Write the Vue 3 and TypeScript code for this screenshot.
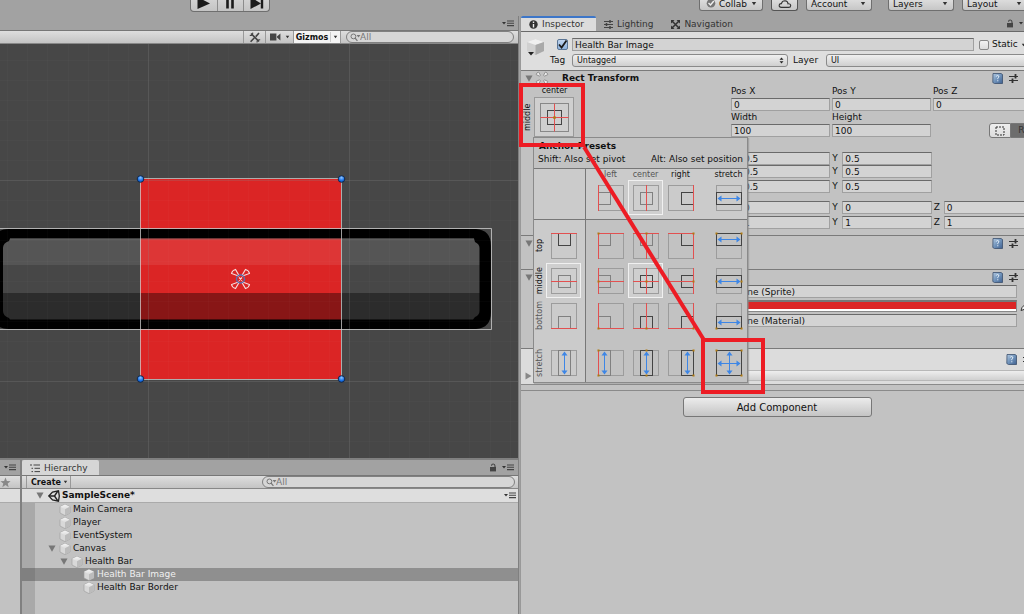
<script setup lang="ts">
import { ref } from 'vue'

type H = 'none' | 'left' | 'center' | 'right' | 'stretch'
type V = 'none' | 'top' | 'middle' | 'bottom' | 'stretch'

interface Glyph {
  box: { x: number; y: number; w: number; h: number }
  faint: boolean
  redX: number | null
  redY: number | null
  dots: { x: number; y: number }[]
  blueH: boolean
  blueV: boolean
}

const columns: H[] = ['left', 'center', 'right', 'stretch']
const rows: V[] = ['top', 'middle', 'bottom', 'stretch']

const lo = 5.5
const hi = 30.5
const mid = 18.5
const size = 12

function span(key: string): [number, number] {
  if (key === 'stretch') return [lo, hi - lo]
  if (key === 'left' || key === 'top') return [lo, size]
  if (key === 'right' || key === 'bottom') return [hi - size, size]
  return [mid - size / 2, size]
}

function anchor(key: string): number[] {
  if (key === 'stretch') return [lo, hi]
  if (key === 'left' || key === 'top') return [lo]
  if (key === 'right' || key === 'bottom') return [hi]
  return [mid]
}

function glyph(h: H, v: V): Glyph {
  const [x, w] = span(h === 'none' ? 'center' : h)
  const [y, ht] = span(v === 'none' ? 'middle' : v)
  const dots =
    h === 'none' || v === 'none' ? [] : anchor(h).flatMap((ax) => anchor(v).map((ay) => ({ x: ax, y: ay })))
  return {
    box: { x, y, w, h: ht },
    faint: h === 'left' || (h === 'center' && (v === 'top' || v === 'none')) || (h === 'none' && v !== 'top'),
    redX: h === 'none' || h === 'stretch' || (v === 'stretch' && h !== 'left') ? null : anchor(h)[0],
    redY: v === 'none' || v === 'stretch' || h === 'stretch' ? null : anchor(v)[0],
    dots,
    blueH: h === 'stretch',
    blueV: v === 'stretch',
  }
}

interface Cell { id: string; kind: string; on: boolean; g: Glyph }

const headerCells: Cell[] = columns.map((h) => ({
  id: 'head-' + h, kind: 'c-' + h, on: h === 'center', g: glyph(h, 'none'),
}))
const presetRows = rows.map((v) => ({
  v,
  head: { id: 'row-' + v, kind: 'c-head', on: v === 'middle', g: glyph('none', v) } as Cell,
  cells: columns.map((h) => ({
    id: v + '-' + h, kind: 'c-' + h, on: h === 'center' && v === 'middle', g: glyph(h, v),
  })) as Cell[],
}))

interface Node { name: string; depth: number; open?: boolean; selected?: boolean }
const nodes: Node[] = [
  { name: 'Main Camera', depth: 0 },
  { name: 'Player', depth: 0 },
  { name: 'EventSystem', depth: 0 },
  { name: 'Canvas', depth: 0, open: true },
  { name: 'Health Bar', depth: 1, open: true },
  { name: 'Health Bar Image', depth: 2, selected: true },
  { name: 'Health Bar Border', depth: 2 },
]

const objectName = ref('Health Bar Image')
const active = ref(true)
const isStatic = ref(false)

const minorX = [7, 27, 47, 68, 88, 108, 128, 168, 188, 208, 228, 248, 268, 289, 309, 329, 369, 389, 409, 429, 449, 469, 490, 510]
const minorY = [60, 80, 100, 120, 140, 160, 200, 220, 240, 261, 281, 301, 321, 341, 361, 401, 421, 441]
const handles = [[140, 179], [341, 179], [140, 379], [341, 379]]

const vectorRows = [
  { id: 'Anchor min', cls: '', x: '0.5', y: '0.5', z: null },
  { id: 'Anchor max', cls: '', x: '0.5', y: '0.5', z: null },
  { id: 'Pivot', cls: 'gap-s', x: '0.5', y: '0.5', z: null },
  { id: 'Rotation', cls: 'gap-l', x: '0', y: '0', z: '0' },
  { id: 'Scale', cls: 'gap-s', x: '1', y: '1', z: '1' },
]
</script>

<template>
  <div class="app">
    <svg class="defs" aria-hidden="true">
      <defs>
        <linearGradient id="cubeTop" x1="0" y1="0" x2="0" y2="1">
          <stop offset="0" stop-color="#f4f4f4" />
          <stop offset="1" stop-color="#dcdcdc" />
        </linearGradient>
        <linearGradient id="bookFill" x1="0" y1="0" x2="1" y2="1">
          <stop offset="0" stop-color="#b4cbe2" />
          <stop offset="0.5" stop-color="#6f92ba" />
          <stop offset="1" stop-color="#3f6090" />
        </linearGradient>
      </defs>
      <symbol id="cube" viewBox="0 0 12 12">
        <path d="M6 .5 11 2.6 V9 L6 11.6 1 9 V2.6Z" fill="#d8d8d8" stroke="#9a9a9a" stroke-width=".6" />
        <path d="M6 .6 10.8 2.7 6 5.2 1.2 2.7Z" fill="url(#cubeTop)" />
        <path d="M6 5.2 10.8 2.8 V8.9 L6 11.3Z" fill="#bcbcbc" />
      </symbol>
      <symbol id="book" viewBox="0 0 11 11">
        <path d="M1 .5 H9 L10.5 1.5 V10.5 H2.5 L.8 9.5Z" fill="url(#bookFill)" stroke="#3a4f6d" stroke-width=".8" />
        <path d="M4.3 3.6 Q4.5 2.4 5.7 2.5 Q7.2 2.7 6.8 4 Q6.6 4.7 5.8 5.2 V6.2 M5.8 7.2 V8.3" fill="none" stroke="#e6f0fa" stroke-width="1" />
      </symbol>
      <symbol id="sliders" viewBox="0 0 11 11">
        <path d="M1 3.5 H10 M1 7.5 H10" stroke="#333" stroke-width="1.2" />
        <path d="M7.5 1 V5.5 M4.5 5.5 V10" stroke="#333" stroke-width="1.8" />
      </symbol>
      <symbol id="menu" viewBox="0 0 12 7">
        <path d="M0 2 H4 L2 4.4Z" fill="#333" />
        <path d="M5 1 H12 M5 3.3 H12 M5 5.6 H12" stroke="#444" stroke-width="1.1" />
      </symbol>
      <symbol id="lock" viewBox="0 0 8 9">
        <rect x="1" y="4" width="6" height="4.4" fill="#444" />
        <path d="M2.5 2.8 Q2.6 1 4.2 1 Q6 1 6 3 V4.4" fill="none" stroke="#444" stroke-width="1.1" />
      </symbol>
      <symbol id="lens" viewBox="0 0 12 9">
        <circle cx="3.4" cy="3.4" r="2.4" fill="none" stroke="#777" />
        <path d="M5 5 L7.4 7.8" stroke="#777" stroke-width="1.2" />
        <path d="M6.5 2 H10.5 L8.5 4.6Z" fill="#777" />
      </symbol>
      <symbol id="down" viewBox="0 0 6 5"><path d="M.8 1 H5.2 L3 4.2Z" fill="#333" /></symbol>
      <symbol id="fold" viewBox="0 0 8 7"><path d="M.5 .5 H7.5 L4 6.8Z" fill="#777" /></symbol>
    </svg>

    <header class="topbar">
      <div class="play">
        <button type="button" aria-label="Play"><svg viewBox="0 0 26 11"><path d="M6.5 -3 L19 3.5 6.5 9Z" fill="#1b1b1b" /></svg></button>
        <button type="button" aria-label="Pause"><svg viewBox="0 0 26 11"><path d="M9.5 -1 V8.5 M14.5 -1 V8.5" stroke="#1b1b1b" stroke-width="2.6" /></svg></button>
        <button type="button" aria-label="Step"><svg viewBox="0 0 26 11"><path d="M6.5 -3 L17 3.5 6.5 9Z" fill="#1b1b1b" /><path d="M18 -1 V8.5" stroke="#1b1b1b" stroke-width="2.4" /></svg></button>
      </div>
      <div class="global">
        <button type="button" class="tb collab">
          <svg width="10" height="10" viewBox="0 0 10 10"><circle cx="5" cy="4.2" r="4.3" fill="#777" /><path d="M2.5 4 L4.5 6 7.8 2" fill="none" stroke="#f0f0f0" stroke-width="1.4" /></svg>
          <span>Collab</span>
          <svg width="6" height="5"><use href="#down" /></svg>
        </button>
        <button type="button" class="tb cloud" aria-label="Services">
          <svg width="14" height="10" viewBox="0 0 14 10"><path d="M3.4 7.4 Q1 7.2 1.2 5.2 Q1.5 3.4 3.4 3.6 Q4.2 .8 7 .8 Q9.8 1 10 3.8 Q12.6 3.6 12.7 5.6 Q12.6 7.4 10.8 7.4Z" fill="none" stroke="#333" stroke-width="1.1" /></svg>
        </button>
        <div class="tbsel account"><select aria-label="Account"><option>Account</option></select><svg width="6" height="5"><use href="#down" /></svg></div>
        <div class="tbsel layers"><select aria-label="Layers"><option>Layers</option></select><svg width="6" height="5"><use href="#down" /></svg></div>
        <div class="tbsel"><select aria-label="Layout"><option>Layout</option></select><svg width="6" height="5"><use href="#down" /></svg></div>
      </div>
    </header>

    <div class="workspace">
      <main class="left">
        <div class="strip scene-strip"><svg width="12" height="7"><use href="#menu" /></svg></div>
        <div class="toolbar">
          <button type="button" class="tool wide" aria-label="Tools">
            <svg width="12" height="11" viewBox="0 0 12 11"><path d="M2 1.5 L10 9.5 M10 1 L6.8 4.6 M5.2 6 L1.6 9.8" stroke="#444" stroke-width="1.6" /><path d="M.8 3.4 Q3.6 4 3.8 .6 M8 10.4 Q8 7.4 11.2 7.8" stroke="#444" fill="none" stroke-width="1.1" /></svg>
          </button>
          <button type="button" class="tool cam" aria-label="Camera">
            <svg width="11" height="8" viewBox="0 0 11 8"><path d="M0 .5 H6.4 V7.5 H0Z M7 3.6 L10.4 .4 V7.6 L7 4.6Z" fill="#444" /></svg>
            <svg width="5" height="4" viewBox="0 0 6 5"><use href="#down" width="6" height="5" /></svg>
          </button>
          <button type="button" class="tool gizmos">Gizmos <i></i><svg width="5" height="4" viewBox="0 0 6 5"><use href="#down" width="6" height="5" /></svg></button>
          <label class="search scene-search"><svg width="12" height="9"><use href="#lens" /></svg><input type="search" placeholder="All" aria-label="Search scene" /></label>
        </div>

        <div class="viewport">
          <svg class="canvas" viewBox="0 44 518 414" preserveAspectRatio="xMidYMid slice" role="img" aria-label="Scene view">
            <defs>
              <radialGradient id="knob" cx=".5" cy=".3" r=".7">
                <stop offset="0" stop-color="#8fc4ff" />
                <stop offset=".6" stop-color="#1d74e8" />
                <stop offset="1" stop-color="#0b57c4" />
              </radialGradient>
            </defs>
            <rect x="0" y="44" width="518" height="414" fill="#474747" />
            <rect x="140" y="179" width="201" height="200" fill="#db2525" />
            <rect x="2" y="238" width="478" height="27" fill="#fff" fill-opacity=".08" />
            <rect x="2" y="293" width="478" height="27" fill="#000" fill-opacity=".38" />
            <path fill-rule="evenodd" d="M8 229 H476 Q491 230 491 246 V312 Q491 328 476 329 H8 Q-1 329 -6 322 V236 Q-1 229 8 229Z M10 238.500 L9 241 Q3 243 3 248 V311 Q3 316 9 318 L10 319.500 H473 L475 317 Q479.500 315 479.500 311 V248 Q479.500 244 475 242 L474 238.500Z" fill="#000" />
            <path d="M10 239 H474" stroke="#777" stroke-opacity=".6" />
            <g stroke="#fff" stroke-opacity=".018">
              <path v-for="x in minorX" :key="'x' + x" :d="`M${x}.5 44 V458`" />
              <path v-for="y in minorY" :key="'y' + y" :d="`M0 ${y}.5 H518`" />
            </g>
            <path d="M148.500 44 V458 M349.500 44 V458 M0 180.500 H518 M0 381.500 H518" stroke="#888" stroke-opacity=".25" />
            <path d="M0 228.500 H491.500 V329.500 H0" fill="none" stroke="#c4c4c4" stroke-opacity=".85" />
            <rect x="140.500" y="178.500" width="201" height="201" fill="none" stroke="#cfcfcf" stroke-opacity=".75" />
            <circle v-for="(p, i) in handles" :key="i" :cx="p[0] + 0.5" :cy="p[1]" r="3.300" fill="url(#knob)" stroke="#10233f" stroke-width=".9" />
            <g fill="none" stroke="#f6dede" stroke-width="1.100">
              <path d="M238.500 276 L231.500 273.500 Q232 270.500 235.500 269.500 L239 275.500Z" />
              <path d="M242.500 276 L249.500 273.500 Q249 270.500 245.500 269.500 L242 275.500Z" />
              <path d="M238.500 282 L231.500 284.500 Q232 287.500 235.500 288.500 L239 282.500Z" />
              <path d="M242.500 282 L249.500 284.500 Q249 287.500 245.500 288.500 L242 282.500Z" />
              <path d="M239 277.500 L242 280.500 M242 277.500 L239 280.500" />
            </g>
            <circle cx="240.500" cy="279" r="4" fill="none" stroke="#5a6fae" stroke-width="1.400" />
          </svg>
        </div>

        <div class="lower">
          <aside class="stub">
            <div class="strip"><svg width="12" height="7"><use href="#menu" /></svg></div>
            <div class="toolbar"><svg width="11" height="11" viewBox="0 0 11 11"><path d="M5.5 .6 L6.9 4 10.600 4.200 7.700 6.500 8.700 10.200 5.500 8.100 2.300 10.200 3.300 6.500 .4 4.200 4.100 4Z" fill="#888" /></svg></div>
            <div class="band"></div>
          </aside>
          <section class="hierarchy">
            <div class="strip">
              <button type="button" class="tab htab">
                <svg width="10" height="9" viewBox="0 0 10 9"><path d="M0 1 H2 M3.500 1 H10 M1.500 4.300 H3 M4.500 4.300 H10 M1.500 7.600 H3 M4.500 7.600 H10" stroke="#444" /></svg>
                Hierarchy
              </button>
              <span class="corner"><svg width="8" height="9"><use href="#lock" /></svg><svg width="12" height="7"><use href="#menu" /></svg></span>
            </div>
            <div class="toolbar htools">
              <button type="button" class="tool create">Create <svg width="5" height="4" viewBox="0 0 6 5"><use href="#down" width="6" height="5" /></svg></button>
              <label class="search tree-search"><svg width="12" height="9"><use href="#lens" /></svg><input type="search" placeholder="All" aria-label="Search hierarchy" /></label>
            </div>
            <div class="scene-row">
              <svg width="8" height="7"><use href="#fold" /></svg>
              <svg width="12" height="12" viewBox="0 0 12 12"><path d="M.8 6 L4.500 2 10.500 .8 11.300 6 10.500 11.200 4.500 10Z" fill="none" stroke="#222" stroke-width="1.300" /><path d="M.8 6 H6.500 M6.500 6 L9.800 1.200 M6.500 6 L9.800 10.800" stroke="#222" stroke-width="1.400" /></svg>
              <b>SampleScene*</b>
              <svg class="end" width="12" height="7"><use href="#menu" /></svg>
            </div>
            <ul class="tree">
              <li v-for="n in nodes" :key="n.name" :class="{ selected: n.selected }" :style="{ paddingLeft: 26 + n.depth * 12 + 'px' }">
                <span class="twist"><svg v-if="n.open" width="8" height="7"><use href="#fold" /></svg></span>
                <svg width="12" height="12"><use href="#cube" /></svg>
                <span>{{ n.name }}</span>
              </li>
            </ul>
          </section>
        </div>
      </main>

      <section class="inspector">
        <div class="clip">
          <div class="strip tabs">
            <button type="button" class="tab on">
              <svg width="9" height="9" viewBox="0 0 9 9"><circle cx="4.500" cy="4.500" r="4.200" fill="#333" /><path d="M4.500 1.500 V3 M4.500 4 V7.500" stroke="#eee" stroke-width="1.400" /></svg>
              Inspector
            </button>
            <button type="button" class="tab">
              <svg width="9" height="9" viewBox="0 0 9 9"><path d="M0 1.500 H9 M0 4.500 H9 M0 7.500 H9" stroke="#444" /><path d="M6 0 V3 M2.500 3 V6 M6 6 V9" stroke="#444" stroke-width="1.500" /></svg>
              Lighting
            </button>
            <button type="button" class="tab">
              <svg width="9" height="9" viewBox="0 0 9 9"><path d="M1 1 L8 8 M8 1 L1 8" stroke="#333" stroke-width="1.500" /><path d="M0 0 H3.500 L0 3.500Z M9 0 V3.500 L5.500 0Z M0 9 V5.500 L3.500 9Z M9 9 H5.500 L9 5.500Z" fill="#333" /></svg>
              Navigation
            </button>
            <span class="corner"><svg width="8" height="9"><use href="#lock" /></svg><svg width="12" height="7"><use href="#menu" /></svg></span>
          </div>

          <div class="object">
            <svg class="big-cube" width="20" height="20" viewBox="0 0 20 20"><path d="M9.500 1 L18 4 V13 L9.500 17 1 13 V4Z" fill="#d0d0d0" /><path d="M9.500 1 L18 4 9.500 7 1 4Z" fill="#efefef" /><path d="M9.500 7 L18 4 V13 L9.500 17Z" fill="#a9a9a9" /><path d="M2 14 H8 L5 17.500Z" fill="#222" /></svg>
            <div class="obj-rows">
              <div class="obj-row">
                <span class="check"><input v-model="active" type="checkbox" aria-label="Active" /><svg v-if="active" viewBox="0 0 11 11"><path d="M2 5.500 L4.600 8.500 9.500 1.500" fill="none" stroke="#1a1a1a" stroke-width="1.800" /></svg></span>
                <input v-model="objectName" class="field name" type="text" aria-label="Name" />
                <label class="static"><input v-model="isStatic" type="checkbox" class="plain" />Static <svg width="5" height="4" viewBox="0 0 6 5"><use href="#down" width="6" height="5" /></svg></label>
              </div>
              <div class="obj-row">
                <label class="tag" for="tag">Tag</label>
                <span class="drop tag-drop"><select id="tag"><option>Untagged</option></select><svg width="5" height="7" viewBox="0 0 5 7"><path d="M.5 2.800 H4.500 L2.500 .4Z M.5 4.200 H4.500 L2.500 6.600Z" fill="#222" /></svg></span>
                <label class="layer" for="layer">Layer</label>
                <span class="drop"><select id="layer"><option>UI</option></select></span>
              </div>
            </div>
          </div>

          <section class="comp">
            <div class="comp-head">
              <svg width="8" height="7"><use href="#fold" /></svg>
              <svg class="rt-icon" width="14" height="14" viewBox="0 0 14 14"><g fill="#eee" stroke="#8a8a8a" stroke-width=".9"><path d="M1.200 3.600 Q1.500 1.500 3.600 1 L5.400 4.200 4.600 5.200Z" /><path d="M12.800 3.600 Q12.500 1.500 10.400 1 L8.600 4.200 9.400 5.200Z" /><path d="M1.200 10.400 Q1.500 12.500 3.600 13 L5.400 9.800 4.600 8.800Z" /><path d="M12.800 10.400 Q12.500 12.500 10.400 13 L8.600 9.800 9.400 8.800Z" /></g></svg>
              <b>Rect Transform</b>
              <span class="tools"><svg width="11" height="11"><use href="#book" /></svg><svg width="11" height="11"><use href="#sliders" /></svg><svg width="6" height="5"><use href="#down" /></svg></span>
            </div>
            <div class="rt-body">
              <div class="anchor">
                <span class="anchor-h">center</span>
                <span class="anchor-v">middle</span>
                <button type="button" class="anchor-btn" aria-label="Anchor presets">
                  <svg width="38" height="38" viewBox="0 0 38 38">
                    <rect x="5.500" y="5.500" width="28" height="28" fill="none" stroke="#888" />
                    <rect x="12.500" y="12.500" width="14" height="14" fill="none" stroke="#444" />
                    <path d="M19.500 5.500 V33.500 M5.500 19.500 H33.500" stroke="#e25050" />
                    <circle cx="19.500" cy="19.500" r="1.500" fill="#b07a10" />
                  </svg>
                </button>
              </div>
              <div class="fields">
                <div class="trio">
                  <label>Pos X<input class="field" value="0" /></label>
                  <label>Pos Y<input class="field" value="0" /></label>
                  <label>Pos Z<input class="field" value="0" /></label>
                  <label>Width<input class="field" value="100" /></label>
                  <label>Height<input class="field" value="100" /></label>
                  <div class="modes">
                    <button type="button" aria-label="Blueprint mode"><svg width="10" height="10" viewBox="0 0 10 10"><rect x="1" y="1" width="8" height="8" fill="none" stroke="#333" stroke-dasharray="2 1" /></svg></button>
                    <button type="button" class="raw">R</button>
                  </div>
                </div>
                <div class="vectors">
                  <div v-for="r in vectorRows" :key="r.id" class="vec" :class="r.cls">
                    <label><span></span><input class="field" :value="r.x" :aria-label="r.id" /></label>
                    <label><span>Y</span><input class="field" :value="r.y" /></label>
                    <label v-if="r.z"><span>Z</span><input class="field" :value="r.z" /></label>
                  </div>
                </div>
              </div>
            </div>
          </section>

          <section class="comp renderer">
            <div class="comp-head">
              <svg width="8" height="7"><use href="#fold" /></svg>
              <span class="tools"><svg width="11" height="11"><use href="#book" /></svg><svg width="11" height="11"><use href="#sliders" /></svg><svg width="6" height="5"><use href="#down" /></svg></span>
            </div>
          </section>

          <section class="comp image">
            <div class="comp-head">
              <svg width="8" height="7"><use href="#fold" /></svg>
              <span class="tools"><svg width="11" height="11"><use href="#book" /></svg><svg width="11" height="11"><use href="#sliders" /></svg><svg width="6" height="5"><use href="#down" /></svg></span>
            </div>
            <div class="props">
              <input class="field obj" aria-label="Source image" value="None (Sprite)" />
              <div class="color-row"><button type="button" class="swatch" aria-label="Color"></button><svg width="12" height="12" viewBox="0 0 12 12"><path d="M2 10.500 L3 7.500 7 3.500 9 5.500 5 9.500Z" fill="#eee" stroke="#333" /><path d="M7 2 L10.500 5.500" stroke="#222" stroke-width="2" /></svg></div>
              <input class="field obj" aria-label="Material" value="None (Material)" />
            </div>
          </section>

          <section class="comp material">
            <div class="mat-head"><span class="tools"><svg width="11" height="11"><use href="#book" /></svg><svg width="11" height="11"><use href="#sliders" /></svg></span></div>
            <div class="shader"><svg width="7" height="8" viewBox="0 0 7 8"><path d="M.5 .5 V7.500 L6.500 4Z" fill="#888" /></svg><span class="shader-bar"></span></div>
          </section>
          <div class="rule"></div>
          <div class="add-row"><button type="button" class="add">Add Component</button></div>
        </div>

        <div class="popup" role="dialog" aria-label="Anchor Presets">
          <b class="ptitle">Anchor Presets</b>
          <div class="hint"><span>Shift: Also set pivot</span><span>Alt: Also set position</span></div>
          <div class="grid head">
            <span class="corner-cell"></span>
            <span v-for="h in columns" :key="h" class="col-label" :class="['l-' + h]">{{ h }}</span>
            <button v-for="c in headerCells" :key="c.id" type="button" class="cell" :class="[c.kind, { on: c.on }]" :aria-label="c.id">
              <svg viewBox="0 0 36 36">
                <rect x="5.500" y="5.500" width="25" height="25" class="frame" />
                <rect :x="c.g.box.x" :y="c.g.box.y" :width="c.g.box.w" :height="c.g.box.h" class="inner" :class="{ faint: c.g.faint }" />
                <path v-if="c.g.redX !== null" :d="`M${c.g.redX} 5 V31`" class="red" />
                <path v-if="c.g.blueH" d="M7 18.500 H29" class="blue" />
                <path v-if="c.g.blueH" d="M6.500 18.500 l4 -3 v6z M29.500 18.500 l-4 -3 v6z" class="tip" />
              </svg>
            </button>
          </div>
          <div v-for="r in presetRows" :key="r.v" class="grid" :class="'r-' + r.v">
            <span class="row-label" :class="'v-' + r.v"><span>{{ r.v }}</span></span>
            <button v-for="c in [r.head, ...r.cells]" :key="c.id" type="button" class="cell" :class="[c.kind, { on: c.on }]" :aria-label="c.id">
              <svg viewBox="0 0 36 36">
                <rect x="5.500" y="5.500" width="25" height="25" class="frame" />
                <rect :x="c.g.box.x" :y="c.g.box.y" :width="c.g.box.w" :height="c.g.box.h" class="inner" :class="{ faint: c.g.faint }" />
                <path v-if="c.g.redX !== null" :d="`M${c.g.redX} 5 V31`" class="red" />
                <path v-if="c.g.redY !== null" :d="`M5 ${c.g.redY} H31`" class="red" />
                <path v-if="c.g.blueH" :d="`M7 ${Math.floor(c.g.box.y + c.g.box.h / 2) + 0.5} H29`" class="blue" />
                <path v-if="c.g.blueH" :d="`M6.500 ${Math.floor(c.g.box.y + c.g.box.h / 2) + 0.5} l4 -3 v6z m23 0 l-4 -3 v6z`" class="tip" />
                <path v-if="c.g.blueV" :d="`M${Math.floor(c.g.box.x + c.g.box.w / 2) + 0.5} 7 V29`" class="blue" />
                <path v-if="c.g.blueV" :d="`M${Math.floor(c.g.box.x + c.g.box.w / 2) + 0.5} 6.500 l-3 4 h6z m0 23 l-3 -4 h6z`" class="tip" />
                <rect v-for="(d, i) in c.g.dots" :key="i" :x="d.x - 1" :y="d.y - 1" width="2" height="2" fill="#b07a10" />
              </svg>
            </button>
          </div>
        </div>

        <svg class="marks" width="246" height="380" viewBox="521 16 246 380" aria-hidden="true">
          <g fill="none" stroke="#ed1c24" stroke-width="4">
            <rect x="521" y="85" width="62" height="60" />
            <rect x="703" y="340" width="60" height="52" />
            <path d="M584 147 L704 340" />
          </g>
        </svg>
      </section>
    </div>
  </div>
</template>

<style>
html, body { margin: 0; background: #c2c2c2; }
</style>

<style scoped>
.app {
  display: flex; flex-direction: column; min-height: 100vh; overflow: hidden;
  background: #a2a2a2; color: #111;
  font-family: "DejaVu Sans", sans-serif; font-size: 9px; line-height: 13px;
}
.app *, .app *::before { box-sizing: border-box; }
button, input, select { font: inherit; color: inherit; margin: 0; padding: 0; border: 0; border-radius: 0; background: none; appearance: none; outline: 0; }
svg { display: block; flex: none; }
.defs { position: absolute; width: 0; height: 0; }

.topbar { display: flex; align-items: flex-start; height: 16px; padding-left: 190px; }
.play { display: flex; border: 1px solid #6f6f6f; border-top: 0; border-radius: 0 0 4px 4px; background: linear-gradient(#d2d2d2, #c4c4c4); }
.play button { width: 26px; height: 11px; }
.play button + button { border-left: 1px solid #8c8c8c; }
.play svg { width: 26px; height: 11px; }
.global { display: flex; margin-left: auto; margin-right: -4px; }
.tb, .tbsel { display: flex; align-items: center; height: 11px; border: 1px solid #6f6f6f; border-top: 0; border-radius: 0 0 3px 3px; background: linear-gradient(#dcdcdc, #c6c6c6); line-height: 8px; }
.collab { width: 64px; gap: 3px; padding: 0 5px 3px 6px; margin-right: 8px; }
.collab span { flex: 1; text-align: left; }
.cloud { width: 27px; justify-content: center; margin-right: 8px; border-color: #555; }
.tbsel { width: 66px; padding: 0 5px 3px 4px; }
.tbsel select { flex: 1; min-width: 0; height: 10px; line-height: 10px; }
.account { margin-right: 16px; }
.layers { margin-right: 8px; }

.workspace { flex: 1; display: grid; grid-template-columns: minmax(0, 518fr) 3px minmax(0, 503fr); }
.left { grid-column: 1; display: flex; flex-direction: column; min-width: 0; box-shadow: 1px 0 #808080; }
.strip { display: flex; height: 14px; align-items: center; background: #a2a2a2; }
.scene-strip { justify-content: flex-end; padding-right: 4px; }
.toolbar { display: flex; height: 14px; flex: none; align-items: center; justify-content: flex-end; border-top: 1px solid #777; border-bottom: 1px solid #888; background: linear-gradient(#dedede, #c4c4c4); }
.tool { display: flex; align-items: center; justify-content: center; gap: 4px; height: 12px; border-left: 1px solid #999; }
.wide { width: 22px; }
.cam { width: 28px; }
.gizmos { width: 48px; background: #f4f4f4; font-size: 8px; font-weight: bold; border-right: 1px solid #999; gap: 2px; }
.gizmos i { width: 1px; height: 10px; background: #ccc; }
.search { display: flex; align-items: center; height: 12px; border: 1px solid #808080; border-radius: 6px; background: #d6d6d6; padding-left: 3px; }
.search svg { margin-right: -2px; }
.search input { flex: 1; min-width: 0; height: 10px; line-height: 10px; }
.search input::placeholder { color: #777; opacity: 1; }
.scene-search { width: 168px; margin: 0 4px 0 5px; }

.viewport { flex: 1; min-height: 0; position: relative; background: #474747; overflow: hidden; }
.canvas { width: 100%; height: 100%; }

.lower { display: flex; height: 156px; flex: none; border-top: 2px solid #808080; background: #808080; gap: 2px; }
.lower .strip { height: 15px; flex: none; }
.stub { width: 20px; display: flex; flex-direction: column; background: #c2c2c2; }
.stub .strip { justify-content: flex-end; padding-right: 4px; }
.stub .toolbar { justify-content: flex-start; }
.band { height: 14px; border-bottom: 1px solid #aaa; background: #dedede; }
.hierarchy { flex: 1; display: flex; flex-direction: column; background: #c2c2c2; min-width: 0; }
.tab { display: flex; align-items: center; gap: 4px; height: 100%; padding: 1px 11px 0 8px; color: #333; }
.htab { background: #d6d6d6; align-self: stretch; border-radius: 2px 2px 0 0; }
.corner { display: flex; align-items: center; gap: 5px; margin-left: auto; padding-right: 4px; }
.htools { justify-content: space-between; }
.create { border-right: 1px solid #999; margin-left: 4px; padding: 0 2px 0 4px; font-size: 8px; font-weight: bold; gap: 2px; }
.tree-search { width: 253px; margin-right: 3px; }
.scene-row { display: flex; align-items: center; gap: 4px; height: 14px; flex: none; padding: 0 2px 0 14px; background: #dedede; border-bottom: 1px solid #aaa; }
.scene-row b { margin-left: -2px; }
.end { margin-left: auto; }
.tree { flex: 1; margin: 0; padding: 0; list-style: none; background: linear-gradient(90deg, #a9a9a9 13px, transparent 13px); }
.tree li { display: flex; align-items: center; height: 13px; gap: 3px; }
.tree li.selected { background: linear-gradient(90deg, #808080 13px, #8f8f8f 13px); color: #f0f0f0; }
.twist { width: 8px; }
.tree li > svg { margin-right: -1px; }

.inspector { grid-column: 3; position: relative; min-width: 0; background: #c2c2c2; border-left: 1px solid #999; margin-left: -1px; }
.clip { overflow: hidden; padding-bottom: 12px; }
.clip > * { width: calc(100% + 9px); }
.clip > .tabs { width: 100%; height: 15px; }
.tabs .tab { padding: 1px 10px 0 8px; }
.tabs .tab.on { padding: 0 12px 0 8px; background: #dcdcdc; border-top: 2px solid #3d76c8; border-radius: 2px 2px 0 0; }
.tabs .corner { padding-right: 0; margin-right: -7px; }
.object { display: flex; height: 39px; border-top: 1px solid #6a6a6a; background: #dedede; padding: 6px 0 0 5px; }
.obj-rows { flex: 1; display: flex; flex-direction: column; gap: 3px; }
.obj-row { display: flex; align-items: center; height: 13px; }
.big-cube { width: 20px; }
.check { position: relative; width: 11px; height: 11px; margin: 0 4px 0 11px; }
.check input { display: block; width: 11px; height: 11px; border: 1px solid #5a7595; border-radius: 2px; background: linear-gradient(#bfd4ee, #8fb2dc); }
.check svg { position: absolute; inset: 0; pointer-events: none; }
.field { display: block; width: 100%; height: 13px; padding: 0 2px; border: 1px solid #a0a0a0; border-top-color: #6a6a6a; background: #d3d3d3; line-height: 11px; }
.name { flex: 1; width: auto; }
.static { display: flex; align-items: center; width: 59px; gap: 3px; padding-left: 5px; }
.plain { width: 10px; height: 10px; border: 1px solid #888; border-radius: 2px; background: linear-gradient(#f2f2f2, #dcdcdc); }
.tag { width: 26px; padding-left: 4px; white-space: nowrap; }
.layer { width: 38px; padding-left: 5px; }
.drop { position: relative; display: flex; align-items: center; flex: 1; height: 13px; border: 1px solid #8a8a8a; border-radius: 3px; background: linear-gradient(#f0f0f0, #cfcfcf); padding: 0 3px 0 4px; }
.tag-drop { flex: 0 0 216px; }
.drop select { flex: 1; min-width: 0; height: 11px; line-height: 11px; font-size: 8px; }

.comp { border-top: 1px solid #7a7a7a; }
.comp-head { display: flex; align-items: center; height: 14px; padding-left: 4px; }
.rt-icon { margin-left: 2px; }
.comp-head b { margin-left: 13px; }
.tools { display: flex; align-items: center; gap: 5px; margin-left: auto; padding-right: 3px; }
.rt-body { display: flex; height: 150px; }
.anchor { flex: 0 0 210px; display: grid; grid-template-columns: 13px 41px; grid-template-rows: 12px 40px; }
.anchor-h { grid-column: 2; text-align: center; font-size: 8px; line-height: 12px; }
.anchor-v { grid-column: 1; grid-row: 2; writing-mode: vertical-rl; transform: rotate(180deg); text-align: center; font-size: 8px; line-height: 13px; }
.anchor-btn { display: flex; grid-column: 2; grid-row: 2; width: 40px; height: 40px; border: 1px solid #999; background: #cfcfcf; }
.fields { flex: 1; }
.trio { display: grid; grid-template-columns: repeat(3, 1fr); column-gap: 2px; }
.modes { display: flex; align-items: flex-start; justify-content: flex-start; padding: 12px 0 0 56px; }
.modes button { display: flex; align-items: center; justify-content: center; width: 22px; height: 15px; border: 1px solid #777; border-radius: 3px 0 0 3px; background: linear-gradient(#eee, #ddd); }
.modes .raw { border-radius: 0 3px 3px 0; background: #6d6d6d; color: #333; border-left: 0; }
.vectors { padding-top: 14px; }
.vec { display: grid; grid-template-columns: repeat(3, 1fr); column-gap: 2px; }
.vec label { display: flex; }
.vec span { flex: 0 0 10px; }
.gap-s { margin-top: 2px; }
.gap-l { margin-top: 8px; }
.renderer { height: 34px; }
.image { height: 79px; }
.props { display: flex; flex-direction: column; gap: 2px; padding: 1px 16px 0 210px; }
.obj { padding-left: 3px; }
.color-row { display: flex; height: 12px; margin-right: -14px; }
.swatch { flex: 1; margin-right: 2px; border: 1px solid #888; border-top: 2px solid #777; background: linear-gradient(#db2525 7px, #fff 7px); }
.material { height: 37px; border-bottom: 1px solid #8a8a8a; background: #dcdcdc; }
.mat-head { display: flex; height: 20px; padding-right: 0; }
.mat-head .tools { padding-right: 0; }
.shader { display: flex; align-items: center; height: 13px; padding-left: 4px; }
.shader-bar { flex: 1; height: 11px; margin-left: 12px; border-radius: 3px; border: 1px solid #b8b8b8; background: linear-gradient(#eee, #d0d0d0); }
.rule { height: 6px; border-bottom: 1px solid #8a8a8a; }
.add-row { display: flex; justify-content: center; padding-top: 6px; }
.add { width: 189px; height: 20px; font-size: 10px; border: 1px solid #777; border-radius: 3px; background: linear-gradient(#ececec, #c4c4c4); }

.popup { position: absolute; left: 12px; top: 121px; width: 215px; border: 1px solid #8a8a8a; background: #c2c2c2; box-shadow: 1px 1px 1px #8888; }
.ptitle { display: block; height: 14px; padding: 2px 0 0 5px; }
.hint { display: flex; justify-content: space-between; height: 16px; padding: 1px 4px 0; white-space: nowrap; }
.grid { display: grid; grid-template-columns: 12px 35px 12px 35px 35px 35px 13px 35px; grid-template-rows: 35px; background: linear-gradient(90deg, #cbcbcb 51px, #777 51px, #777 52px, transparent 52px); }
.grid.head { grid-template-rows: 11px 35px; height: 52px; border-top: 1px solid #777; border-bottom: 1px solid #777; background: linear-gradient(90deg, #cbcbcb 51px, #777 51px, #777 52px, #cbcbcb 52px); }
.corner-cell { grid-row: 1 / 3; grid-column: 1 / 4; }
.col-label, .row-label { font-size: 8px; line-height: 11px; color: #111; }
.col-label { grid-row: 1; text-align: center; }
.l-left, .l-center, .v-bottom, .v-stretch { color: #555; }
.l-left, .c-left { grid-column: 4; }
.l-center, .c-center { grid-column: 5; }
.l-right, .c-right { grid-column: 6; }
.l-stretch, .c-stretch { grid-column: 8; }
.c-head { grid-column: 2; }
.row-label { grid-column: 1; display: flex; align-items: center; justify-content: center; }
.row-label span { writing-mode: vertical-rl; transform: rotate(180deg); line-height: 12px; }
.cell { display: flex; align-items: flex-start; grid-row: 1; width: 35px; height: 35px; }
.head .cell { grid-row: 2; }
.cell svg { width: 36px; height: 36px; }
.cell.on { background: #cfcfcf; box-shadow: inset 0 0 0 1px #f0f0f0; }
.r-top { padding-top: 8px; }
.r-stretch { padding: 12px 0 2px; }
.frame { fill: none; stroke: #9c9c9c; }
.inner { fill: none; stroke: #444; }
.inner.faint { stroke: #808080; }
.red { fill: none; stroke: #e25050; }
.blue { fill: none; stroke: #3d86e6; }
.tip { fill: #3d86e6; }
.marks { position: absolute; left: 0; top: 0; overflow: visible; pointer-events: none; }
</style>
